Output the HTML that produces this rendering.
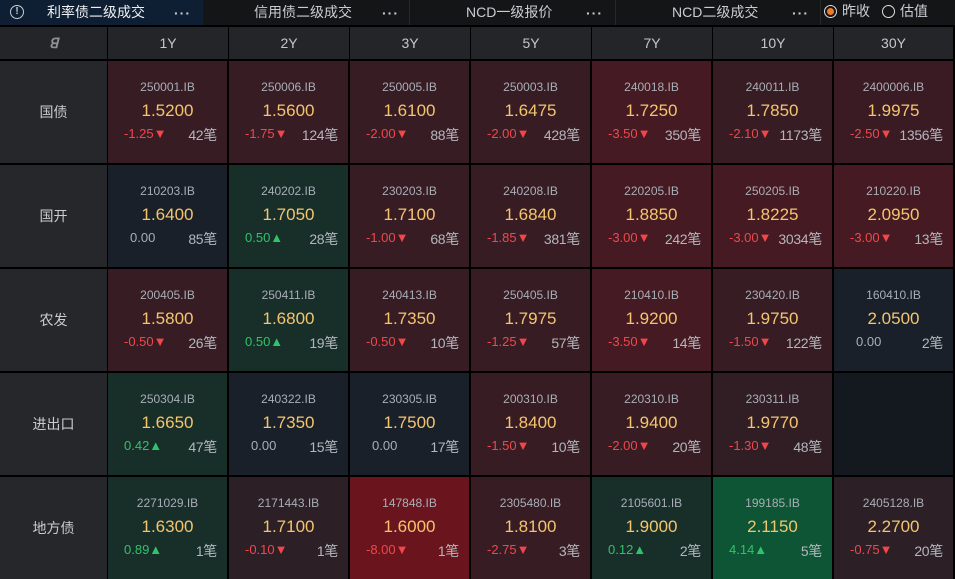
<!DOCTYPE html>
<html><head><meta charset="utf-8">
<style>
*{box-sizing:border-box;margin:0;padding:0}
body{width:955px;height:577px;background:#000;font-family:"Liberation Sans","Noto Sans CJK SC",sans-serif;position:relative;overflow:hidden}
.top{position:absolute;left:0;top:0;width:955px;height:25px;background:#141517}
.tab{position:absolute;top:0;height:25px;color:#c9ccd1;font-size:14px;line-height:24px;border-right:1px solid #26282b}
.tab .t{position:absolute;top:0}
.tab .d{position:absolute;top:1px;font-size:14px;letter-spacing:1px;color:#c9ccd1;font-weight:bold}
.a{position:absolute;}
.hd{position:absolute;top:27px;height:32px;background:#232529;color:#c4c7cc;font-size:14px;text-align:center;line-height:32px}
.lb{position:absolute;left:0;width:107px;height:102px;background:#25272b;color:#c8cbd0;font-size:14px;text-align:center;line-height:102px}
.c{position:absolute;width:119px;height:102px;text-align:center}
.c .k{position:absolute;left:0;right:0;top:19px;font-size:12px;color:#a9aeb6}
.c .v{position:absolute;left:0;right:0;top:40px;font-size:17px;color:#f4c56d}
.c .ch{position:absolute;left:16px;top:65px;font-size:13px}
.c .n{position:absolute;right:10px;top:64px;font-size:14px;color:#b3b7bd;letter-spacing:-0.3px}
.dn{color:#f0474b}.up{color:#2fc36a}.z{color:#a9aeb6}
.r1{background:#2c1f26}.r2{background:#371c24}.r3{background:#451a22}.r4{background:#6a151e}
.g1{background:#182e29}.g2{background:#0d5534}.nn{background:#1a2029}.em{background:#14191f}
</style></head><body>
<div class="top">
 <div class="tab" style="left:0;width:203px;background:#0f1f33;border-right:none">
  <span class="t" style="left:10px;width:14px;height:14px;border:1.5px solid #c9ccd1;border-radius:50%;top:5px;line-height:11px;text-align:center;font-size:10px;font-weight:bold">!</span>
  <span class="t" style="left:47px;color:#eef0f3">利率债二级成交</span>
  <span class="d" style="left:174px">···</span></div>
 <div class="tab" style="left:204px;width:206px"><span class="t" style="left:50px">信用债二级成交</span><span class="d" style="left:178px">···</span></div>
 <div class="tab" style="left:410px;width:206px"><span class="t" style="left:56px">NCD一级报价</span><span class="d" style="left:176px">···</span></div>
 <div class="tab" style="left:616px;width:205px"><span class="t" style="left:56px">NCD二级成交</span><span class="d" style="left:176px">···</span></div>
 <span class="a" style="left:824px;top:5px;width:13px;height:13px;border:1.5px solid #ddd;border-radius:50%"></span>
 <span class="a" style="left:827px;top:8px;width:7px;height:7px;background:#f47a20;border-radius:50%"></span>
 <span class="a" style="left:842px;top:0;line-height:23px;font-size:14px;color:#c9ccd1">昨收</span>
 <span class="a" style="left:882px;top:5px;width:13px;height:13px;border:1.5px solid #ddd;border-radius:50%"></span>
 <span class="a" style="left:900px;top:0;line-height:23px;font-size:14px;color:#c9ccd1">估值</span>
</div>
<div class="hd" style="left:0;width:107px;color:#8d9096;font-weight:bold;font-style:italic;font-size:14px">ꓭ</div>
<div class="hd" style="left:108px;width:120px">1Y</div>
<div class="hd" style="left:229px;width:120px">2Y</div>
<div class="hd" style="left:350px;width:120px">3Y</div>
<div class="hd" style="left:471px;width:120px">5Y</div>
<div class="hd" style="left:592px;width:120px">7Y</div>
<div class="hd" style="left:713px;width:120px">10Y</div>
<div class="hd" style="left:834px;width:119px">30Y</div>

<div class="lb" style="top:61px">国债</div>
<div class="lb" style="top:165px">国开</div>
<div class="lb" style="top:269px">农发</div>
<div class="lb" style="top:373px">进出口</div>
<div class="lb" style="top:477px">地方债</div>

<div class="c r2" style="left:108px;top:61px"><div class="k">250001.IB</div><div class="v">1.5200</div><div class="ch dn">-1.25▼</div><div class="n">42笔</div></div>
<div class="c r2" style="left:229px;top:61px"><div class="k">250006.IB</div><div class="v">1.5600</div><div class="ch dn">-1.75▼</div><div class="n">124笔</div></div>
<div class="c r2" style="left:350px;top:61px"><div class="k">250005.IB</div><div class="v">1.6100</div><div class="ch dn">-2.00▼</div><div class="n">88笔</div></div>
<div class="c r2" style="left:471px;top:61px"><div class="k">250003.IB</div><div class="v">1.6475</div><div class="ch dn">-2.00▼</div><div class="n">428笔</div></div>
<div class="c r3" style="left:592px;top:61px"><div class="k">240018.IB</div><div class="v">1.7250</div><div class="ch dn">-3.50▼</div><div class="n">350笔</div></div>
<div class="c r2" style="left:713px;top:61px"><div class="k">240011.IB</div><div class="v">1.7850</div><div class="ch dn">-2.10▼</div><div class="n">1173笔</div></div>
<div class="c r2" style="left:834px;top:61px;background:#3b1b23"><div class="k">2400006.IB</div><div class="v">1.9975</div><div class="ch dn">-2.50▼</div><div class="n">1356笔</div></div>

<div class="c nn" style="left:108px;top:165px"><div class="k">210203.IB</div><div class="v">1.6400</div><div class="ch z" style="left:22px">0.00</div><div class="n">85笔</div></div>
<div class="c g1" style="left:229px;top:165px"><div class="k">240202.IB</div><div class="v">1.7050</div><div class="ch up">0.50▲</div><div class="n">28笔</div></div>
<div class="c r2" style="left:350px;top:165px"><div class="k">230203.IB</div><div class="v">1.7100</div><div class="ch dn">-1.00▼</div><div class="n">68笔</div></div>
<div class="c r2" style="left:471px;top:165px"><div class="k">240208.IB</div><div class="v">1.6840</div><div class="ch dn">-1.85▼</div><div class="n">381笔</div></div>
<div class="c r3" style="left:592px;top:165px"><div class="k">220205.IB</div><div class="v">1.8850</div><div class="ch dn">-3.00▼</div><div class="n">242笔</div></div>
<div class="c r3" style="left:713px;top:165px"><div class="k">250205.IB</div><div class="v">1.8225</div><div class="ch dn">-3.00▼</div><div class="n">3034笔</div></div>
<div class="c r3" style="left:834px;top:165px"><div class="k">210220.IB</div><div class="v">2.0950</div><div class="ch dn">-3.00▼</div><div class="n">13笔</div></div>

<div class="c r2" style="left:108px;top:269px"><div class="k">200405.IB</div><div class="v">1.5800</div><div class="ch dn">-0.50▼</div><div class="n">26笔</div></div>
<div class="c g1" style="left:229px;top:269px"><div class="k">250411.IB</div><div class="v">1.6800</div><div class="ch up">0.50▲</div><div class="n">19笔</div></div>
<div class="c r2" style="left:350px;top:269px"><div class="k">240413.IB</div><div class="v">1.7350</div><div class="ch dn">-0.50▼</div><div class="n">10笔</div></div>
<div class="c r2" style="left:471px;top:269px"><div class="k">250405.IB</div><div class="v">1.7975</div><div class="ch dn">-1.25▼</div><div class="n">57笔</div></div>
<div class="c r3" style="left:592px;top:269px"><div class="k">210410.IB</div><div class="v">1.9200</div><div class="ch dn">-3.50▼</div><div class="n">14笔</div></div>
<div class="c r2" style="left:713px;top:269px"><div class="k">230420.IB</div><div class="v">1.9750</div><div class="ch dn">-1.50▼</div><div class="n">122笔</div></div>
<div class="c nn" style="left:834px;top:269px"><div class="k">160410.IB</div><div class="v">2.0500</div><div class="ch z" style="left:22px">0.00</div><div class="n">2笔</div></div>

<div class="c g1" style="left:108px;top:373px"><div class="k">250304.IB</div><div class="v">1.6650</div><div class="ch up">0.42▲</div><div class="n">47笔</div></div>
<div class="c nn" style="left:229px;top:373px"><div class="k">240322.IB</div><div class="v">1.7350</div><div class="ch z" style="left:22px">0.00</div><div class="n">15笔</div></div>
<div class="c nn" style="left:350px;top:373px"><div class="k">230305.IB</div><div class="v">1.7500</div><div class="ch z" style="left:22px">0.00</div><div class="n">17笔</div></div>
<div class="c r2" style="left:471px;top:373px"><div class="k">200310.IB</div><div class="v">1.8400</div><div class="ch dn">-1.50▼</div><div class="n">10笔</div></div>
<div class="c r2" style="left:592px;top:373px"><div class="k">220310.IB</div><div class="v">1.9400</div><div class="ch dn">-2.00▼</div><div class="n">20笔</div></div>
<div class="c r1" style="left:713px;top:373px;background:#311d24"><div class="k">230311.IB</div><div class="v">1.9770</div><div class="ch dn">-1.30▼</div><div class="n">48笔</div></div>
<div class="c em" style="left:834px;top:373px"></div>

<div class="c g1" style="left:108px;top:477px"><div class="k">2271029.IB</div><div class="v">1.6300</div><div class="ch up">0.89▲</div><div class="n">1笔</div></div>
<div class="c r1" style="left:229px;top:477px"><div class="k">2171443.IB</div><div class="v">1.7100</div><div class="ch dn">-0.10▼</div><div class="n">1笔</div></div>
<div class="c r4" style="left:350px;top:477px"><div class="k">147848.IB</div><div class="v">1.6000</div><div class="ch dn">-8.00▼</div><div class="n">1笔</div></div>
<div class="c r2" style="left:471px;top:477px"><div class="k">2305480.IB</div><div class="v">1.8100</div><div class="ch dn">-2.75▼</div><div class="n">3笔</div></div>
<div class="c g1" style="left:592px;top:477px"><div class="k">2105601.IB</div><div class="v">1.9000</div><div class="ch up">0.12▲</div><div class="n">2笔</div></div>
<div class="c g2" style="left:713px;top:477px"><div class="k">199185.IB</div><div class="v">2.1150</div><div class="ch up">4.14▲</div><div class="n">5笔</div></div>
<div class="c r1" style="left:834px;top:477px"><div class="k">2405128.IB</div><div class="v">2.2700</div><div class="ch dn">-0.75▼</div><div class="n">20笔</div></div>
</body></html>
